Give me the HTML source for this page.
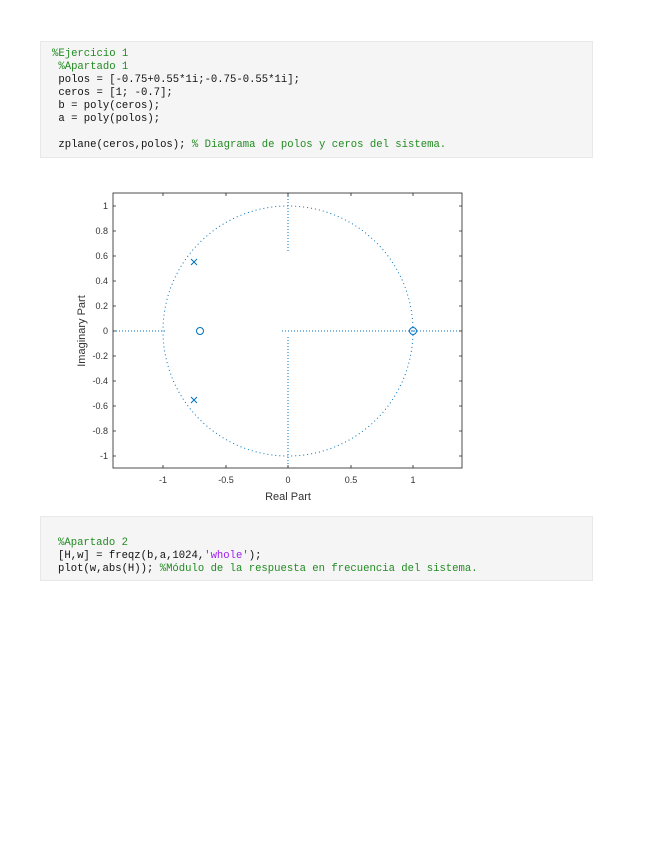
<!DOCTYPE html>
<html><head><style>
body{margin:0;background:#fff;width:655px;height:848px;position:relative;overflow:hidden}
.blk{position:absolute;left:40px;width:551px;background:#f5f5f5;border:1px solid #e8e8e8}
.c{position:absolute;left:0;font-family:"Liberation Mono",monospace;font-size:10.6px;line-height:13px;white-space:pre;color:#111}
.g{color:#228b22}.p{color:#a020f0}
</style></head><body>
<div class="blk" style="top:41px;height:115px">
<div class="c" style="left:11px;top:6px"><span class="g">%Ejercicio 1</span>
 <span class="g">%Apartado 1</span>
 polos = [-0.75+0.55*1i;-0.75-0.55*1i];
 ceros = [1; -0.7];
 b = poly(ceros);
 a = poly(polos);

 zplane(ceros,polos); <span class="g">% Diagrama de polos y ceros del sistema.</span></div>
</div>
<svg style="position:absolute;left:0;top:0" width="655" height="848" font-family="Liberation Sans,sans-serif" font-size="9">
<rect x="113" y="193" width="349" height="275" fill="none" stroke="#222" stroke-width="0.8"/>
<g stroke="#0072bd" stroke-width="1" fill="none">
<circle cx="288" cy="331" r="125" stroke-dasharray="1 3"/>
<line x1="113" y1="331" x2="165" y2="331" stroke-dasharray="1 2"/>
<line x1="282" y1="331" x2="462" y2="331" stroke-dasharray="1 2"/>
<line x1="288" y1="193" x2="288" y2="252" stroke-dasharray="1 2"/>
<line x1="288" y1="337" x2="288" y2="468" stroke-dasharray="1 2"/>
<circle cx="200" cy="331" r="3.5"/><circle cx="413" cy="331" r="3.5"/>
<path d="M191 259l6 6M197 259l-6 6M191 397l6 6M197 397l-6 6"/>
</g>
<g stroke="#222" stroke-width="0.8">
<path d="M113 206h3M113 231h3M113 256h3M113 281h3M113 306h3M113 331h3M113 356h3M113 381h3M113 406h3M113 431h3M113 456h3"/>
<path d="M459 206h3M459 231h3M459 256h3M459 281h3M459 306h3M459 331h3M459 356h3M459 381h3M459 406h3M459 431h3M459 456h3"/>
<path d="M163 468v-3M226 468v-3M288 468v-3M351 468v-3M413 468v-3M163 193v3M226 193v3M288 193v3M351 193v3M413 193v3"/>
</g>
<g fill="#333" text-anchor="end">
<text x="108" y="209">1</text><text x="108" y="234">0.8</text><text x="108" y="259">0.6</text><text x="108" y="284">0.4</text><text x="108" y="309">0.2</text><text x="108" y="334">0</text><text x="108" y="359">-0.2</text><text x="108" y="384">-0.4</text><text x="108" y="409">-0.6</text><text x="108" y="434">-0.8</text><text x="108" y="459">-1</text>
</g>
<g fill="#333" text-anchor="middle">
<text x="163" y="483">-1</text><text x="226" y="483">-0.5</text><text x="288" y="483">0</text><text x="351" y="483">0.5</text><text x="413" y="483">1</text>
<text x="288" y="500" font-size="11">Real Part</text>
<text transform="translate(85,331) rotate(-90)" font-size="11">Imaginary Part</text>
</g>
</svg>
<div class="blk" style="top:516px;height:63px">
<div class="c" style="left:17px;top:20px"><span class="g">%Apartado 2</span>
[H,w] = freqz(b,a,1024,<span class="p">'whole'</span>);
plot(w,abs(H)); <span class="g">%Módulo de la respuesta en frecuencia del sistema.</span></div>
</div>
</body></html>
